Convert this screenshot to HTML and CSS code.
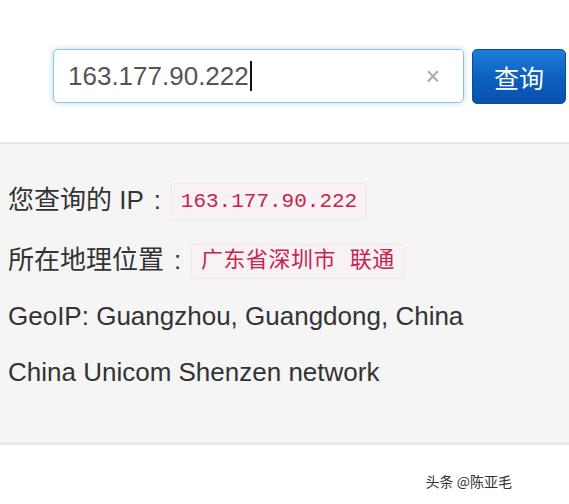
FILE: index.html
```html
<!DOCTYPE html>
<html lang="zh-CN">
<head>
    <meta charset="UTF-8">
    <meta name="viewport" content="width=device-width, initial-scale=1.0">
    <title>IP 查询</title>
    <link rel="stylesheet" href="styles.css">
</head>
<body>

    <div class="search">
        <div class="search-box">
            <span class="search-value">163.177.90.222</span><span class="caret"></span>
            <span class="clear">&times;</span>
        </div>
        <button class="search-btn">查询</button>
    </div>

    <div class="result">
        <p>您查询的 IP<span class="colon">:</span><code>163.177.90.222</code></p>
        <p class="location">所在地理位置<span class="colon">:</span><code class="code-cn">广东省深圳市 联通</code></p>
        <p>GeoIP: Guangzhou, Guangdong, China</p>
        <p>China Unicom Shenzen network</p>
    </div>

    <div class="credit">头条 @陈亚毛</div>

</body>
</html>
```

FILE: styles.css
```css
* {
    margin: 0;
    padding: 0;
    box-sizing: border-box;
}
body {
    background-color: #fff;
    font-family: "Liberation Sans", Arial, "Noto Sans CJK SC", sans-serif;
    color: #333;
}
.search {
    display: flex;
    gap: 8px;
    height: 142px;
    padding: 49px 0 0 53px;
}
.search-box {
    display: flex;
    align-items: center;
    width: 411px;
    height: 54px;
    padding: 0 14px;
    border: 1px solid #8cc2ea;
    border-radius: 5px;
    box-shadow: 0 0 6px rgba(102, 175, 233, 0.45);
    font-size: 26px;
    color: #555;
}
.caret {
    display: inline-block;
    width: 2px;
    height: 30px;
    margin-left: 1px;
    background-color: #111;
}
.clear {
    margin-left: auto;
    margin-right: 9px;
    font-size: 25px;
    color: #a8a8a8;
}
.search-btn {
    width: 94px;
    height: 55px;
    border: 1px solid #0a4c9c;
    border-radius: 5px;
    background: linear-gradient(#1b7fd6, #0c5fbd 55%, #0a4fae);
    color: #fff;
    font-family: "Noto Sans CJK SC", sans-serif;
    font-size: 25px;
    cursor: pointer;
}
/* result panel */
.result {
    background-color: #f5f5f5;
    border-top: 2px solid #e6e6e6;
    border-bottom: 3px solid #e8e8e8;
    padding: 38px 8px 51px;
    font-size: 26px;
    color: #333;
}
.result p {
    line-height: 37px;
    margin-bottom: 19px;
}
.result p:last-child {
    margin-bottom: 0;
}
.result .location {
    padding-top: 3px;
}
.colon {
    display: inline-block;
    width: 27px;
    text-align: center;
}
code {
    display: inline-block;
    padding: 4px 9px;
    line-height: 27px;
    font-family: "Liberation Mono", "Noto Sans CJK SC", monospace;
    font-size: 21px;
    color: #c7254e;
    background-color: #f9f2f4;
    border: 1px solid #f0e6ea;
    border-radius: 3px;
    vertical-align: 2px;
}
.code-cn {
    font-size: 22px;
    letter-spacing: 0.5px;
    padding: 3px 9px;
}
.credit {
    text-align: right;
    padding: 26px 57px 0 0;
    font-size: 14px;
    color: #333;
    font-family: "Noto Sans CJK SC", sans-serif;
}
```
